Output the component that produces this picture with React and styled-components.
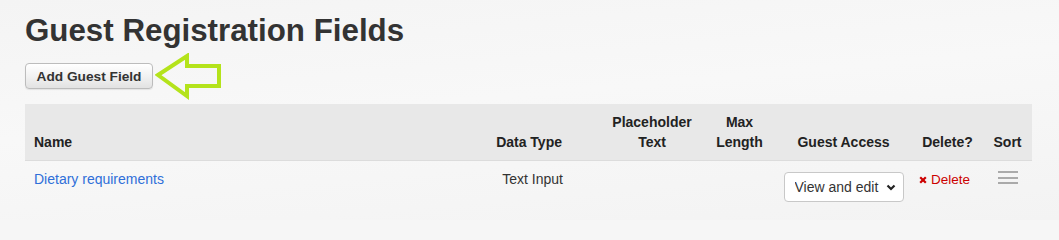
import React from "react";
import styled, { createGlobalStyle } from "styled-components";

const GlobalStyle = createGlobalStyle`
    html, body {
        margin: 0;
        padding: 0;
        background: #f6f6f6;
        font-family: "Liberation Sans", Arial, sans-serif;
        color: #333;
        overflow: hidden;
    }
`

const Page = styled.div`
    padding: 13px 27px 10px 25px;
    background: linear-gradient(175deg, #f4f4f4 0%, #f8f8f8 45%, #f3f3f3 100%);
`

const Title = styled.h1`
    margin: 0;
    font-size: 31.3px;
    line-height: 36px;
    font-weight: 700;
    color: #333;
`

const Toolbar = styled.div`
    margin-top: 4px;
    display: flex;
    align-items: center;
    height: 46px;
`

const Button = styled.button`
    height: 26px;
    width: 128px;
    padding: 0;
    font-family: inherit;
    font-size: 13.7px;
    font-weight: 700;
    color: #333;
    background: linear-gradient(to bottom, #ffffff 0%, #f2f2f2 50%, #e2e2e2 100%);
    border: 1px solid #bcbcbc;
    border-radius: 4px;
    box-shadow: 0 1px 1px rgba(0,0,0,0.08);
    cursor: pointer;
`

const Arrow = styled.svg`
    margin-left: 2px;
    flex: none;
`

const Table = styled.table`
    margin-top: 5px;
    width: 1007px;
    border-collapse: collapse;
    table-layout: fixed;
`

const HeadRow = styled.tr`
    background: #e8e8e8;
`

const Th = styled.th`
    padding: 8px;
    padding-right: ${props => props.$padRight || 8}px;
    padding-left: ${props => props.$padLeft || 8}px;
    font-size: 14px;
    line-height: 20px;
    font-weight: 700;
    color: #222;
    text-align: ${props => props.$align || "center"};
    vertical-align: bottom;
    border-bottom: 1px solid #dcdcdc;
`

const Td = styled.td`
    padding: 8px;
    padding-right: ${props => props.$padRight || 8}px;
    padding-left: ${props => props.$padLeft || 8}px;
    font-size: 14px;
    line-height: 20px;
    color: #333;
    text-align: ${props => props.$align || "center"};
    vertical-align: top;
`

const FieldLink = styled.a`
    color: #2f6fd9;
    text-decoration: none;
`

const SelectWrap = styled.div`
    position: relative;
    display: inline-block;
    margin-top: 3px;
`

const Select = styled.select`
    appearance: none;
    display: block;
    width: 120px;
    height: 30px;
    padding: 0 24px 0 10px;
    font-family: inherit;
    font-size: 14px;
    color: #333;
    background: #fff;
    border: 1px solid #c8c8c8;
    border-radius: 4px;
`

const Chevron = styled.svg`
    position: absolute;
    right: 8px;
    top: 12px;
    pointer-events: none;
`

const DeleteLink = styled.a`
    display: inline-flex;
    align-items: baseline;
    gap: 4px;
    color: #cc0000;
    text-decoration: none;
    font-size: 13.5px;
`

const Handle = styled.div`
    margin: 2px auto 0;
    width: 20px;
    display: flex;
    flex-direction: column;
    gap: 3.5px;
`

const Bar = styled.span`
    display: block;
    height: 2px;
    background: #aaa;
`

const App = () => {
    return (
        <>
            <GlobalStyle />
            <Page>
                <Title>Guest Registration Fields</Title>

                <Toolbar>
                    <Button>Add Guest Field</Button>
                    <Arrow width="68" height="47" viewBox="0 0 68 47">
                        <path
                            d="M3 22 L32 3 L32 13 L64 13 L64 33 L32 33 L32 43 Z"
                            fill="none"
                            stroke="#b4e31b"
                            strokeWidth="4"
                            strokeLinejoin="miter"
                        />
                    </Arrow>
                </Toolbar>

                <Table>
                    <colgroup>
                        <col style={{ width: 440 }} />
                        <col style={{ width: 135 }} />
                        <col style={{ width: 104 }} />
                        <col style={{ width: 71 }} />
                        <col style={{ width: 137 }} />
                        <col style={{ width: 71 }} />
                        <col style={{ width: 49 }} />
                    </colgroup>
                    <thead>
                        <HeadRow>
                            <Th $align="left" $padLeft={9}>Name</Th>
                            <Th $align="right" $padRight={38}>Data Type</Th>
                            <Th>Placeholder Text</Th>
                            <Th>Max Length</Th>
                            <Th>Guest Access</Th>
                            <Th>Delete?</Th>
                            <Th>Sort</Th>
                        </HeadRow>
                    </thead>
                    <tbody>
                        <tr>
                            <Td $align="left" $padLeft={9}>
                                <FieldLink href="#">Dietary requirements</FieldLink>
                            </Td>
                            <Td $align="right" $padRight={37}>Text Input</Td>
                            <Td></Td>
                            <Td></Td>
                            <Td>
                                <SelectWrap>
                                    <Select defaultValue="edit">
                                        <option value="edit">View and edit</option>
                                        <option value="view">View only</option>
                                        <option value="hidden">Hidden</option>
                                    </Select>
                                    <Chevron width="10" height="7" viewBox="0 0 10 7">
                                        <path d="M1.5 1.5 L5 5 L8.5 1.5" fill="none" stroke="#222" strokeWidth="2.2" />
                                    </Chevron>
                                </SelectWrap>
                            </Td>
                            <Td $padLeft={4} $padRight={10}>
                                <DeleteLink href="#">
                                    <svg width="8" height="8" viewBox="0 0 8 8">
                                        <path d="M1.2 1.2 L6.8 6.8 M6.8 1.2 L1.2 6.8" stroke="#cc0000" strokeWidth="2.2" />
                                    </svg>
                                    Delete
                                </DeleteLink>
                            </Td>
                            <Td>
                                <Handle>
                                    <Bar />
                                    <Bar />
                                    <Bar />
                                </Handle>
                            </Td>
                        </tr>
                    </tbody>
                </Table>
            </Page>
        </>
    );
}

export default App;
